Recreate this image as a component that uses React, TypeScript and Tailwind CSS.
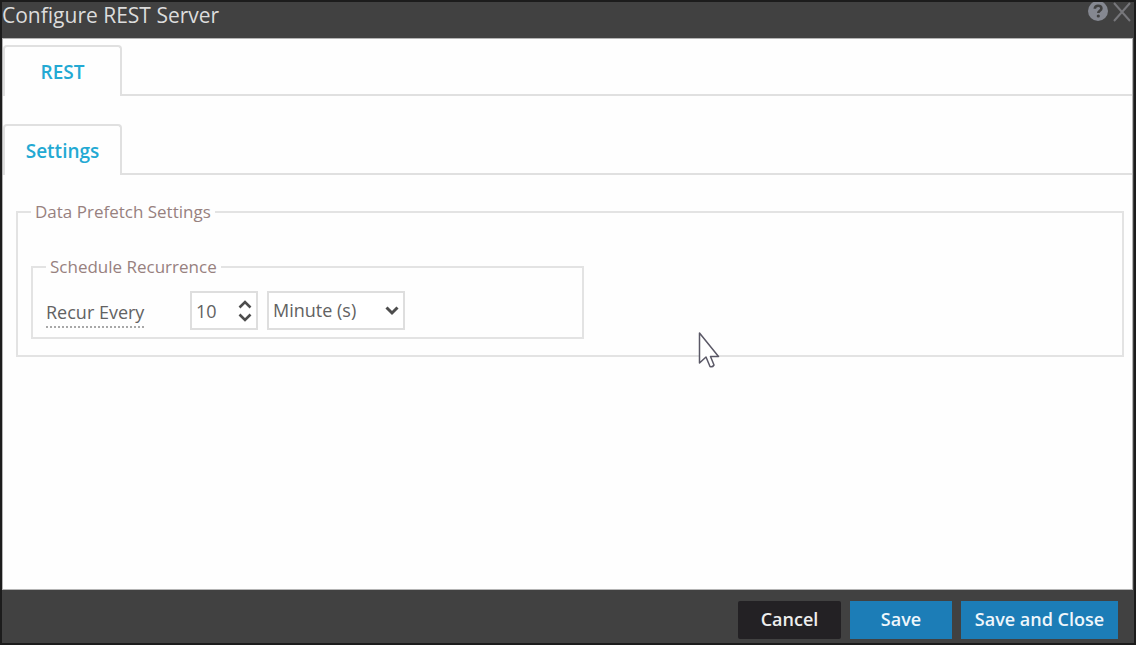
import React from 'react';

const TabBar = ({ label }: { label: string }) => {
  return (
    <div role="tablist" className="flex h-[51px]">
      <button
        type="button"
        role="tab"
        aria-selected="true"
        className="w-[119px] rounded-t-sm border-2 border-b-0 border-[#e0e0e0] pt-px text-[19px] font-semibold text-[#23a9d3]"
      >
        {label}
      </button>
      <div className="flex-1 border-b-2 border-[#e0e0e0]"></div>
    </div>
  );
};

const App = () => {
  return (
    <div className="flex min-h-screen flex-col border-2 border-[#1c1c1c] bg-[#414141] font-['Open_Sans','Noto_Sans',sans-serif]">
      <header className="flex h-9 items-start justify-between pr-0.5">
        <h1 className="text-[21px] leading-[26px] text-[#dcdcdc]">Configure REST Server</h1>
        <div className="flex items-center gap-1">
          <button type="button" aria-label="Help" className="h-5 w-5">
            <svg className="h-5 w-5" viewBox="0 0 20 20" fill="none">
              <circle cx="10" cy="9" r="10" fill="#858891" />
              <path d="M6.8 6.8c0-2 1.3-3.1 3.3-3.1s3.3 1.1 3.3 2.7c0 2.3-3.1 2.3-3.1 4.6" stroke="#414141" strokeWidth="2.6" />
              <circle cx="10.3" cy="14" r="1.6" fill="#414141" />
            </svg>
          </button>
          <button type="button" aria-label="Close" className="h-5 w-5">
            <svg className="h-5 w-5" viewBox="0 0 20 20" fill="none">
              <path d="M2 1l16 18M18 1L2 19" stroke="#77777b" strokeWidth="2" />
            </svg>
          </button>
        </div>
      </header>

      <main className="mr-px flex-1 border border-[#b4b4b4] bg-[#fefefe] pt-[6px]">
        <TabBar label="REST" />
        <div className="mt-7">
          <TabBar label="Settings" />
        </div>

        <fieldset className="mt-[25px] mr-2 ml-[13px] border-2 border-[#e3e3e3] px-[13px] pb-4">
          <legend className="px-1 text-[17px] leading-6 text-[#97817f]">Data Prefetch Settings</legend>

          <fieldset className="mt-[31px] max-w-[553px] border-2 border-[#e3e3e3] px-[13px] pt-3 pb-[7px]">
            <legend className="px-1 text-[17px] leading-6 text-[#97817f]">Schedule Recurrence</legend>
            <div className="flex items-center">
              <div className="w-36 pt-1">
                <label htmlFor="interval" className="block w-fit border-b-2 border-dotted border-[#a8a8a8] text-[18px] leading-7 text-[#626262]">
                  Recur Every
                </label>
              </div>
              <div className="relative mr-[9px]">
                <input
                  id="interval"
                  type="text"
                  inputMode="numeric"
                  defaultValue="10"
                  className="block h-[39px] w-[68px] border-2 border-[#dedede] bg-white px-1 text-[18px] text-[#626262]"
                />
                <svg className="pointer-events-none absolute top-2 right-1.5 h-6 w-3.5" viewBox="0 0 14 24" fill="none" stroke="#4d4d4d" strokeWidth="2.6">
                  <path d="M1.5 8.5L7 3l5.5 5.5M1.5 15.5L7 21l5.5-5.5" />
                </svg>
              </div>
              <div className="relative">
                <select aria-label="Interval unit" className="block h-[39px] w-[138px] appearance-none border-2 border-[#dedede] bg-white px-1 text-[18px] text-[#626262]">
                  <option>Minute (s)</option>
                </select>
                <svg className="pointer-events-none absolute top-3.5 right-1.5 h-3 w-3.5" viewBox="0 0 14 12" fill="none" stroke="#4d4d4d" strokeWidth="3">
                  <path d="M1.5 2.5L7 8l5.5-5.5" />
                </svg>
              </div>
            </div>
          </fieldset>
        </fieldset>
      </main>

      <footer className="flex h-[53px] items-center justify-end gap-[9px] pt-1.5 pr-4">
        <button type="button" className="h-[38px] w-[103px] rounded-xs bg-[#232124] text-[18px] font-semibold text-[#eeeeee]">
          Cancel
        </button>
        <button type="button" className="h-[38px] w-[102px] bg-[#1c7db7] text-[18px] font-semibold text-[#eef6fb]">
          Save
        </button>
        <button type="button" className="h-[38px] w-[157px] bg-[#1c7db7] text-[18px] font-semibold whitespace-nowrap text-[#eef6fb]">
          Save and Close
        </button>
      </footer>

      {/* mouse pointer */}
      <svg className="pointer-events-none absolute top-[331px] left-[698px] h-[38px] w-[22px]" viewBox="0 0 22 38" fill="#ffffff" stroke="#5a5866" strokeWidth="1.5">
        <path d="M1.5 2V32l6.5-6 4 9.5q2.5 1 4-1.500l-3.500-8.500H20.500z" strokeLinejoin="round" />
      </svg>
    </div>
  );
};

export default App;
